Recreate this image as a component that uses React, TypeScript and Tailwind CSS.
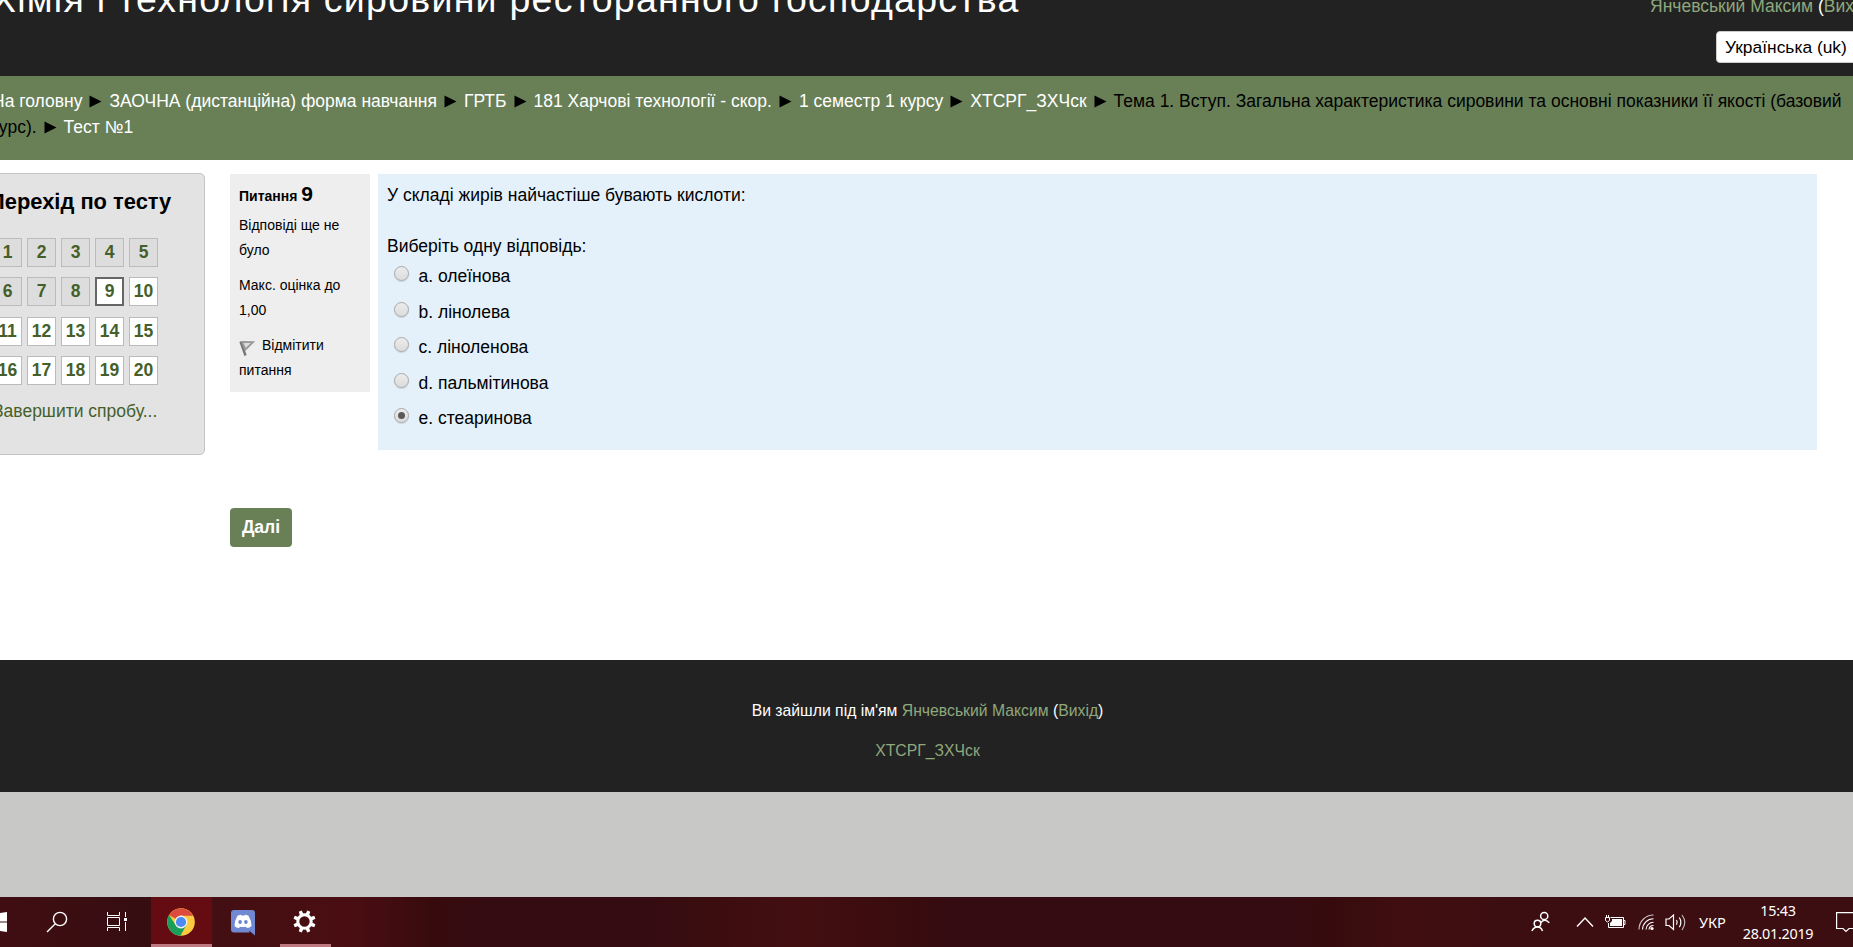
import React from 'react';

const crumbs = [
  'На головну',
  'ЗАОЧНА (дистанційна) форма навчання',
  'ГРТБ',
  '181 Харчові технології - скор.',
  '1 семестр 1 курсу',
  'ХТСРГ_ЗХЧск',
];

const answers = [
  { key: 'a', label: 'олеїнова', gap: 'h-[36px]' },
  { key: 'b', label: 'лінолева', gap: 'h-[35px]' },
  { key: 'c', label: 'ліноленова', gap: 'h-[36px]' },
  { key: 'd', label: 'пальмітинова', gap: 'h-[35px]' },
  { key: 'e', label: 'стеаринова', gap: 'h-[35px]' },
];

const SELECTED = 'e';
const CURRENT = 9;

const Arrow: React.FC = () => (
  <svg width="13" height="13" viewBox="0 0 13 13" className="inline-block mx-[7px] align-[-1px]">
    <path d="M0.5 0.5L12.5 6.5L0.5 12.5Z" fill="#000" />
  </svg>
);

const Header: React.FC = () => (
  <header className="h-[76px] bg-[#222222] flex justify-between overflow-hidden">
    <h1 className="-ml-[9px] -mt-[24px] text-[37.5px] tracking-[1.25px] leading-[46px] text-white whitespace-nowrap">
      Хімія і технологія сировини ресторанного господарства
    </h1>
    <div className="w-[203px] shrink-0 flex flex-col">
      <div className="-mt-[7px] h-[26px] leading-[26px] text-[17.5px] whitespace-nowrap text-white">
        <a className="text-[#8fa87c]">Янчевський Максим</a> (<a className="text-[#8fa87c]">Вихід</a>)
      </div>
      <div className="ml-[66px] mt-[12px] w-[160px] h-[32px] rounded bg-white border border-[#cccccc] pl-[8px] leading-[31px] text-[17.4px] text-black whitespace-nowrap">
        Українська (uk)
      </div>
    </div>
  </header>
);

const Breadcrumbs: React.FC = () => (
  <nav className="h-[84px] bg-[#698057] pt-[12px] text-[17.5px] leading-[26px] text-black overflow-hidden">
    <div className="-ml-[8px] whitespace-nowrap">
      {crumbs.map((c) => (
        <React.Fragment key={c}>
          <a className="text-white">{c}</a>
          <Arrow />
        </React.Fragment>
      ))}
      Тема 1. Вступ. Загальна характеристика сировини та основні показники її якості (базовий
    </div>
    <div className="-ml-[9px] whitespace-nowrap">
      курс).
      <Arrow />
      <a className="text-white">Тест №1</a>
    </div>
  </nav>
);

const QuizNav: React.FC = () => (
  <aside className="-ml-[20px] w-[225px] h-[282px] mt-[13px] pl-[12px] shrink-0 bg-[#e3e3e3] border border-[#c4c4c4] rounded-[5px]">
    <h2 className="-ml-[4px] mt-[14px] h-[28px] leading-[28px] text-[21.9px] font-bold text-black whitespace-nowrap">
      Перехід по тесту
    </h2>
    <div className="mt-[22px] grid grid-cols-[repeat(5,29px)] gap-x-[5px] gap-y-[10.33px]">
      {Array.from({ length: 20 }, (_, i) => i + 1).map((n) => (
        <div
          key={n}
          className={`h-[29px] leading-[27px] text-center text-[17.5px] font-bold text-[#455f2a] border ${
            n === CURRENT
              ? 'bg-white border-[#666666] shadow-[inset_0_0_0_1px_#666666]'
              : n < CURRENT
                ? 'bg-[#dddddd] border-[#bbbbbb]'
                : 'bg-white border-[#bbbbbb]'
          }`}
        >
          {n}
        </div>
      ))}
    </div>
    <a className="block mt-[13px] leading-[26px] text-[17.5px] text-[#455f2a]">Завершити спробу...</a>
  </aside>
);

const QuestionInfo: React.FC = () => (
  <div className="w-[140px] h-[218px] shrink-0 bg-[#eeeeee] pl-[9px] text-[14px] leading-[25px] text-black">
    <h3 className="pt-[7px] h-[39px] leading-[25px] font-bold whitespace-nowrap">
      Питання <span className="text-[21px]">9</span>
    </h3>
    <div>Відповіді ще не<br />було</div>
    <div className="mt-[10px]">Макс. оцінка до<br />1,00</div>
    <div className="mt-[10px]">
      <svg width="16" height="18" viewBox="0 0 16 18" className="inline-block mr-[7px] align-[-7px]">
        <path d="M1.5 2.5L6.5 16.5" stroke="#777" strokeWidth="2.4" />
        <path d="M3 3L14 3.2L6.5 10.5Z" stroke="#999" strokeWidth="1.8" fill="#ddd" />
      </svg>
      Відмітити<br />питання
    </div>
  </div>
);

const Radio: React.FC<{ checked: boolean }> = ({ checked }) => (
  <span className="w-[15px] h-[15px] rounded-full border border-[#a9a9a9] bg-linear-to-b from-[#ececec] to-[#dcdcdc] shadow-[0_1px_1px_rgba(0,0,0,0.12)] flex items-center justify-center">
    {checked && <span className="w-[7px] h-[7px] rounded-full bg-[#5a5a5a]" />}
  </span>
);

const Question: React.FC = () => (
  <div className="w-[1439px] h-[276px] ml-[8px] bg-[#e4f0fa] pl-[9px] pt-[8px] text-[17.5px] leading-[26px] text-black">
    <p>У складі жирів найчастіше бувають кислоти:</p>
    <p className="mt-[25px]">Виберіть одну відповідь:</p>
    <div className="mt-[4px] pl-[7px]">
      {answers.map((a) => (
        <div key={a.key} className={`flex ${a.gap}`}>
          <div className="pt-[3px] mr-[9.5px]">
            <Radio checked={a.key === SELECTED} />
          </div>
          <span>{a.key}. {a.label}</span>
        </div>
      ))}
    </div>
  </div>
);

const Footer: React.FC = () => (
  <footer className="h-[132px] bg-[#222222] pt-[38px] pl-[2px] text-center text-[15.75px] leading-[26px] text-white">
    <div>
      Ви зайшли під ім'ям <a className="text-[#8fa87c]">Янчевський Максим</a> (<a className="text-[#8fa87c]">Вихід</a>)
    </div>
    <div className="mt-[14px] text-[#8fa87c]">ХТСРГ_ЗХЧск</div>
  </footer>
);

const gearTeeth = [22.5, 67.5, 112.5, 157.5, 202.5, 247.5, 292.5, 337.5];

const Taskbar: React.FC = () => (
  <div className="h-[50px] flex justify-between overflow-hidden bg-[linear-gradient(90deg,#400e12_0px,#360d11_140px,#430f12_215px,#4a0e12_350px,#400c10_400px,#370b0c_430px,#350c12_480px,#350c12_650px,#3a0d0f_700px,#440e11_800px,#390c0e_900px,#350c12_960px,#350c12_1280px,#360b0d_1330px,#400e11_1400px,#3d0e11_1500px,#3d0e11_1853px)]">
    <div className="flex">
      <div className="w-[31px] pt-[15px]">
        <svg width="7" height="20" viewBox="0 0 7 20">
          <path d="M0 1L7 0V9.4H0ZM0 10.4H7V20L0 19Z" fill="#fff" />
        </svg>
      </div>
      <div className="w-[60px] pt-[14px] pl-[15px]">
        <svg width="22" height="22" viewBox="0 0 22 22" fill="none" stroke="#fff" strokeWidth="1.4">
          <circle cx="14" cy="8" r="6.6" />
          <path d="M9.3 12.7L1 21" />
        </svg>
      </div>
      <div className="w-[60px] pt-[14px] pl-[15px]">
        <svg width="22" height="21" viewBox="0 0 22 21" fill="none" stroke="#fff" strokeWidth="1">
          <path d="M1.5 1V4.5H13.5V1M1.5 20V16.5H13.5V20M1.5 6.5H13.5V14.5H1.5ZM19.5 1V6M19.5 11V20" />
          <path d="M18 7H21V10H18Z" fill="#fff" stroke="none" />
        </svg>
      </div>
      <div className="w-[61px] h-[50px] bg-[#650c13] border-b-[3px] border-[#bd7880] pt-[11px] pl-[16px]">
        <svg width="28" height="28" viewBox="0 0 28 28">
          <circle cx="14" cy="14" r="13.8" fill="#fcca3f" />
          <path d="M14 14L2.05 7.1A13.8 13.8 0 0 1 25.95 7.8H14Z" fill="#dd4b3e" />
          <path d="M2.05 7.1A13.8 13.8 0 0 0 13.4 27.8L19.4 17.1L14 14L8.6 17.1Z" fill="#1a9f5b" />
          <circle cx="14" cy="14" r="6.4" fill="#f1f1f1" />
          <circle cx="14" cy="14" r="5.1" fill="#4c8bf5" />
        </svg>
      </div>
      <div className="w-[68px] pt-[13px] pl-[19px]">
        <svg width="24" height="26" viewBox="0 0 24 26">
          <path d="M3 0H21Q24 0 24 3V25.5L18 20.5L18.8 22.5H3Q0 22.5 0 19.5V3Q0 0 3 0Z" fill="#7189d2" />
          <path d="M6.5 5.8Q8.5 4.7 10 4.7L10.4 5.4H13.6L14 4.7Q15.7 4.8 17.5 5.8Q20.5 10.5 20.5 16Q18.8 17.9 15.9 18L15 16.8Q12 17.4 9 16.8L8.1 18Q5 17.9 3.5 16Q3.5 10.5 6.5 5.8Z" fill="#fff" />
          <ellipse cx="9.1" cy="12" rx="1.8" ry="1.9" fill="#6a82cd" />
          <ellipse cx="14.9" cy="12" rx="1.8" ry="1.9" fill="#6a82cd" />
        </svg>
      </div>
      <div className="w-[51px] h-[50px] border-b-[3px] border-[#bd7880] pt-[13px] pl-[13px]">
        <svg width="23" height="23" viewBox="-11.5 -11.5 23 23">
          <circle r="6.7" fill="none" stroke="#fff" strokeWidth="3" />
          {gearTeeth.map((deg) => (
            <path key={deg} d="M-1.9 -7.3L-1.6 -11.2H1.6L1.9 -7.3Z" transform={`rotate(${deg})`} fill="#fff" />
          ))}
        </svg>
      </div>
    </div>

    <div className="flex text-white font-['Noto_Sans','Open_Sans',sans-serif]">
      <div className="w-[45px] pt-[14px]">
        <svg width="20" height="21" viewBox="0 0 20 21" fill="none" stroke="#fff" strokeWidth="1.5">
          <circle cx="13.2" cy="5" r="3.6" />
          <circle cx="6.5" cy="12.5" r="3.3" />
          <path d="M10 11.5Q13.3 6.8 18.3 11.8M1 20Q2.5 15.9 6.5 15.9T11.5 20" />
        </svg>
      </div>
      <div className="w-[29px] pt-[19px]">
        <svg width="18" height="12" viewBox="0 0 18 12" fill="none" stroke="#fff" strokeWidth="1.4">
          <path d="M1 10.5L9 2L17 10.5" />
        </svg>
      </div>
      <div className="w-[33px] pt-[18px]">
        <svg width="21" height="14" viewBox="0 0 21 14" fill="none" stroke="#fff">
          <path d="M5.5 2.5H18.5V12.5H3.5V8M18.5 5.5H20V9.5H18.5M0.5 2.5V5.5Q2.5 8.5 4.5 5.5V2.5H0.5M1.5 0V2.5M3.5 0V2.5" />
          <path d="M7 4H17V11H5V8L7 6Z" fill="#fff" stroke="none" />
        </svg>
      </div>
      <div className="w-[27px] pt-[17px]">
        <svg width="17" height="17" viewBox="0 0 17 17" fill="none" stroke="#fff" strokeWidth="1.1">
          <path d="M1 15.5A14.5 14.5 0 0 1 15.5 1" opacity="0.75" />
          <path d="M4.5 15.5A11 11 0 0 1 15.5 4.8M8 15.5A7.5 7.5 0 0 1 15.5 8.3M11 15.5A4.5 4.5 0 0 1 15.5 11.5" />
          <circle cx="14" cy="14.5" r="1.6" fill="#fff" stroke="none" />
        </svg>
      </div>
      <div className="w-[34px] pt-[16px]">
        <svg width="22" height="19" viewBox="0 0 22 19" fill="none" stroke="#fff" strokeWidth="1.2">
          <path d="M1 6H4L8.5 2V16.5L4 12.5H1Z" />
          <path d="M11.5 7Q13 9.3 11.5 11.7M14.3 4.5Q17.5 9.3 14.3 14.2" />
          <path d="M17 2Q22.5 9.3 17 17" opacity="0.7" />
        </svg>
      </div>
      <div className="w-[43px] leading-[50px] text-[14.6px]">УКР</div>
      <div className="w-[72px] pt-[2px] text-center text-[14.4px] leading-[23px] tracking-[-0.3px]">
        15:43<br />28.01.2019
      </div>
      <div className="w-[39px] pt-[15px] pl-[22px]">
        <svg width="17" height="21" viewBox="0 0 17 21" fill="none" stroke="#fff" strokeWidth="1.2">
          <path d="M17 0.6H0.6V16.5H7L10 19.5L13 16.5H17" />
        </svg>
      </div>
    </div>
  </div>
);

export default function App() {
  return (
    <div className="w-[1853px] h-[947px] overflow-hidden bg-[#c8c8c6] flex flex-col font-['Liberation_Sans',Arial,sans-serif]">
      <Header />
      <Breadcrumbs />
      <main className="h-[500px] bg-white flex overflow-hidden">
        <QuizNav />
        <div className="ml-[25px] mt-[14px]">
          <div className="flex h-[334px]">
            <QuestionInfo />
            <Question />
          </div>
          <button className="w-[62px] h-[39px] rounded-[4px] bg-[#698057] text-white font-bold text-[17.5px]">
            Далі
          </button>
        </div>
      </main>
      <Footer />
      <div className="flex-1" />
      <Taskbar />
    </div>
  );
}
